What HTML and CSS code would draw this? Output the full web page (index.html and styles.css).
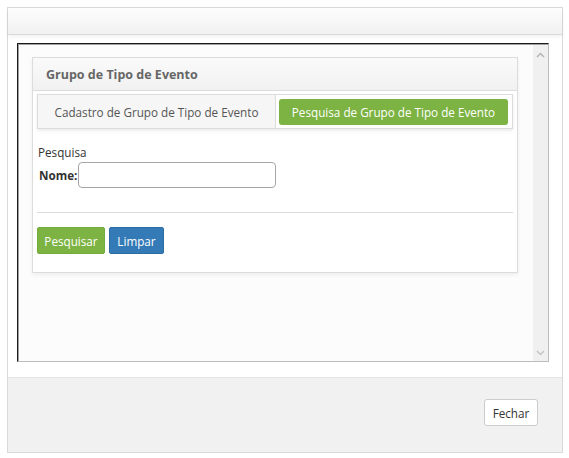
FILE: index.html
```html
<!DOCTYPE html>
<html lang="pt">
<head>
<meta charset="utf-8">
<link rel="stylesheet" href="styles.css">
</head>
<body>
<div class="modal">
  <div class="modal-header"></div>
  <div class="modal-body">
    <div class="frame">
      <div class="frame-content">
        <div class="panel">
          <div class="panel-heading">Grupo de Tipo de Evento</div>
          <div class="panel-body">
            <div class="tabs">
              <div class="tab">Cadastro de Grupo de Tipo de Evento</div>
              <div class="tab active">Pesquisa de Grupo de Tipo de Evento</div>
            </div>
            <div class="section-title">Pesquisa</div>
            <div class="field">
              <label class="label">Nome:</label>
              <input class="input" type="text">
            </div>
            <div class="divider"></div>
            <div class="actions">
              <button class="btn btn-green">Pesquisar</button>
              <button class="btn btn-blue">Limpar</button>
            </div>
          </div>
        </div>
      </div>
      <div class="scrollbar">
        <svg class="arrow" width="9" height="6" viewBox="0 0 9 6"><path d="M1 5 L4.5 1.5 L8 5" fill="none" stroke="#b5b5b5" stroke-width="1.5"/></svg>
        <svg class="arrow" width="9" height="6" viewBox="0 0 9 6"><path d="M1 1 L4.5 4.5 L8 1" fill="none" stroke="#c5c5c5" stroke-width="1.5"/></svg>
      </div>
    </div>
  </div>
  <div class="modal-footer">
    <button class="btn btn-default">Fechar</button>
  </div>
</div>
</body>
</html>
```
FILE: styles.css
```css
* { box-sizing: border-box; }
html, body { margin: 0; padding: 0; background: #fff; }
body {
  font-family: "Open Sans", "Segoe UI", sans-serif;
  font-size: 11.7px;
  color: #333;
  padding: 7px 0 0 7px;
}
.modal {
  width: 556px;
  height: 446px;
  border: 1px solid #d9d9d9;
  display: flex;
  flex-direction: column;
  background: #fff;
}
.modal-header {
  height: 28px;
  background: linear-gradient(#fdfdfd, #f1f1f1);
  border-bottom: 1px solid #dadada;
  box-shadow: 0 2px 4px rgba(0,0,0,0.06);
}
.modal-body {
  flex: 1;
  padding: 8px 13px 15px 9px;
}
.frame {
  height: 319px;
  display: flex;
  border-style: solid;
  border-width: 1px;
  border-color: #1a1a1a #bcbcbc #bcbcbc #1a1a1a;
  box-shadow: inset 1px 1px 0 #a0a0a0;
  background: #fcfcfc;
  padding: 1px 0 0 1px;
}
.frame-content {
  flex: 1;
  padding: 12px 15px 0 13px;
}
.scrollbar {
  width: 15px;
  background: #f0f0f0;
  display: flex;
  flex-direction: column;
  justify-content: space-between;
  align-items: center;
  padding: 7px 0 5px;
}
.panel {
  background: #fff;
  border: 1px solid #dcdcdc;
  box-shadow: 0 2px 4px rgba(0,0,0,0.06);
}
.panel-heading {
  height: 33px;
  line-height: 33px;
  padding-left: 13px;
  font-weight: 700;
  font-size: 12.5px;
  color: #666;
  background: linear-gradient(#fafafa, #f1f1f1);
  border-bottom: 1px solid #dcdcdc;
}
.panel-body {
  padding: 3px 4px 18px 4px;
}
.tabs {
  display: flex;
  align-items: stretch;
  border: 1px solid #dcdcdc;
  box-shadow: 0 2px 3px rgba(0,0,0,0.08);
  height: 35px;
  padding: 0 4px 0 0;
  background: #fff;
}
.tab {
  display: flex;
  align-items: center;
  justify-content: center;
  white-space: nowrap;
  color: #555;
  background: #f6f6f6;
  border-right: 1px solid #dcdcdc;
  width: 238px;
}
.tab.active {
  background: #7cb342;
  color: #fff;
  border: none;
  border-radius: 3px;
  margin: 4px 0 3px 3px;
  width: 229px;
}
.section-title {
  margin-top: 15px;
  padding-left: 1px;
  line-height: 17px;
  color: #333;
}
.field {
  display: flex;
  align-items: center;
  margin-top: 1px;
  padding-left: 2px;
}
.label {
  font-weight: 700;
  color: #333;
  margin-right: 1px;
}
.input {
  width: 198px;
  height: 26px;
  border: 1px solid #a6a6a6;
  border-radius: 4px;
  background: #fff;
  margin: 0;
}
.divider {
  border-top: 1px solid #dcdcdc;
  margin-top: 24px;
}
.actions {
  display: flex;
  gap: 4px;
  margin-top: 14px;
}
.btn {
  font-family: "Open Sans", "Segoe UI", sans-serif;
  font-size: 11.7px;
  height: 27px;
  border-radius: 2px;
  border: 1px solid transparent;
  padding: 0 8px;
  cursor: pointer;
}
.btn-green {
  background: #7cb342;
  border-color: #73ab3b;
  color: #fff;
  width: 68px;
  padding: 0;
}
.btn-blue {
  background: #337ab7;
  border-color: #2e6da4;
  color: #fff;
  width: 55px;
  padding: 0;
}
.modal-footer {
  height: 76px;
  background: #f1f1f1;
  border-top: 1px solid #e4e4e4;
  display: flex;
  justify-content: flex-end;
  align-items: flex-start;
  padding: 21px 24px 0 0;
}
.btn-default {
  background: #fff;
  border-color: #ccc;
  color: #333;
  height: 27px;
  width: 54px;
  padding: 0;
  border-radius: 3px;
}
```
